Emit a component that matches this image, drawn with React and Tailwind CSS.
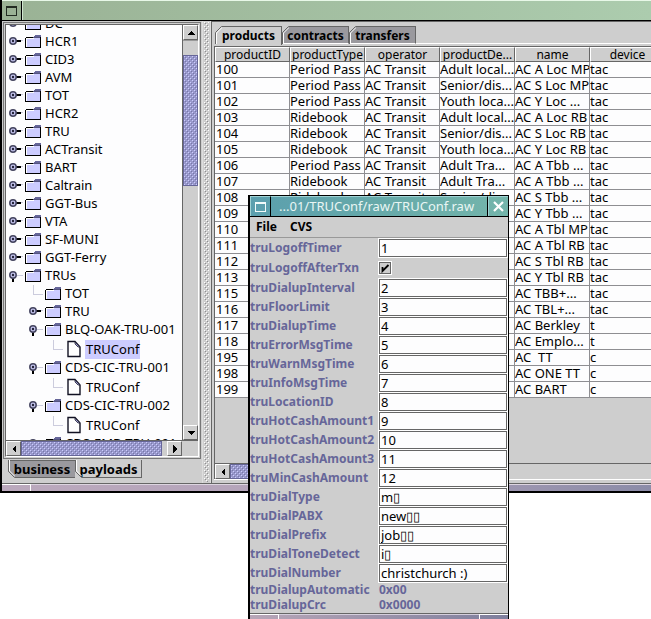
import React from "react";

const rows = [
  ["100", "Period Pass", "AC Transit", "Adult local...", "AC A Loc MP", "tac"],
  ["101", "Period Pass", "AC Transit", "Senior/dis...", "AC S Loc MP", "tac"],
  ["102", "Period Pass", "AC Transit", "Youth loca...", "AC Y Loc ...", "tac"],
  ["103", "Ridebook", "AC Transit", "Adult local...", "AC A Loc RB", "tac"],
  ["104", "Ridebook", "AC Transit", "Senior/dis...", "AC S Loc RB", "tac"],
  ["105", "Ridebook", "AC Transit", "Youth loca...", "AC Y Loc RB", "tac"],
  ["106", "Period Pass", "AC Transit", "Adult Tra...", "AC A Tbb ...", "tac"],
  ["107", "Ridebook", "AC Transit", "Adult Tra...", "AC A Tbb ...", "tac"],
  ["108", "Ridebook", "AC Transit", "Senior/di...", "AC S Tbb ...", "tac"],
  ["109", "", "", "", "AC Y Tbb ...", "tac"],
  ["110", "", "", "", "AC A Tbl MP", "tac"],
  ["111", "", "", "", "AC A Tbl RB", "tac"],
  ["112", "", "", "", "AC S Tbl RB", "tac"],
  ["113", "", "", "", "AC Y Tbl RB", "tac"],
  ["115", "", "", "", "AC TBB+...", "tac"],
  ["116", "", "", "", "AC TBL+...", "tac"],
  ["117", "", "", "", "AC Berkley", "t"],
  ["118", "", "", "", "AC Emplo...", "t"],
  ["195", "", "", "", "AC  TT", "c"],
  ["198", "", "", "", "AC ONE TT", "c"],
  ["199", "", "", "", "AC BART", "c"],
];

const columns = ["productID", "productType", "operator", "productDe...", "name", "device"];

const topNodes = ["DC", "HCR1", "CID3", "AVM", "TOT", "HCR2", "TRU", "ACTransit", "BART", "Caltrain", "GGT-Bus", "VTA", "SF-MUNI", "GGT-Ferry"];

const fields = [
  ["truDialupInterval", "2"],
  ["truFloorLimit", "3"],
  ["truDialupTime", "4"],
  ["truErrorMsgTime", "5"],
  ["truWarnMsgTime", "6"],
  ["truInfoMsgTime", "7"],
  ["truLocationID", "8"],
  ["truHotCashAmount1", "9"],
  ["truHotCashAmount2", "10"],
  ["truHotCashAmount3", "11"],
  ["truMinCashAmount", "12"],
  ["truDialType", "m▯"],
  ["truDialPABX", "new▯▯"],
  ["truDialPrefix", "job▯▯"],
  ["truDialToneDetect", "i▯"],
  ["truDialNumber", "christchurch :)"],
];

function Bumps({ id, light, dark }) {
  return (
    <svg className="block h-full w-full" shapeRendering="crispEdges" aria-hidden="true">
      <defs>
        <pattern id={id} width="4" height="4" patternUnits="userSpaceOnUse">
          <rect x="0" y="0" width="1" height="1" fill={light} />
          <rect x="2" y="2" width="1" height="1" fill={light} />
          <rect x="1" y="1" width="1" height="1" fill={dark} />
          <rect x="3" y="3" width="1" height="1" fill={dark} />
        </pattern>
      </defs>
      <rect width="100%" height="100%" fill={`url(#${id})`} />
    </svg>
  );
}

function Handle({ open }) {
  return (
    <svg className="h-[18px] w-[14px] shrink-0" viewBox="0 0 14 18" aria-hidden="true">
      {open ? (
        <>
          <path d="M8 8.5H14" stroke="#ccccdd" />
          <path d="M4 11V15" stroke="#000" strokeWidth="2" />
        </>
      ) : (
        <>
          <path d="M12 7.5H14" stroke="#ccccdd" />
          <path d="M7 8H12" stroke="#000" strokeWidth="2" />
        </>
      )}
      <circle cx="4" cy="8" r="3.2" fill="#c4c4ee" stroke="#44445f" strokeWidth="1.5" />
      <circle cx="4" cy="8" r="1.2" fill="#222238" />
    </svg>
  );
}

function Folder() {
  return (
    <svg className="h-[18px] w-4 shrink-0" viewBox="0 0 16 18" shapeRendering="crispEdges" aria-hidden="true">
      <rect x="1" y="5" width="14" height="9" fill="#ccccff" />
      <path d="M1 5.5H9M1.5 5V14" stroke="#fff" />
      <path d="M.5 5V14.5H15.5V4M1 4.5H9" stroke="#000" fill="none" />
      <path d="M9 3H10V2H16V4H9Z" fill="#666699" />
      <path d="M8 4.5H15" stroke="#555580" />
    </svg>
  );
}

function Leaf() {
  return (
    <svg className="h-5 w-[14px] shrink-0" viewBox="0 0 14 20" aria-hidden="true">
      <path d="M1 2.5H8L13 8V17.5H1Z" fill="#fff" stroke="#111122" strokeWidth="1.4" />
      <path d="M8 3V5L11 8H13Z" fill="#9999cc" stroke="#222233" strokeWidth=".8" />
    </svg>
  );
}

function Elbow() {
  return (
    <svg className="h-[18px] w-[14px] shrink-0" viewBox="0 0 14 18" shapeRendering="crispEdges" aria-hidden="true">
      <path d="M4.5 0V9.5H14" stroke="#ccccdd" fill="none" />
    </svg>
  );
}

function Node({ label, open }) {
  return (
    <li className="flex h-[18px] items-center">
      <Handle open={open} />
      <span className="w-[2px]" />
      <Folder />
      <span className="ml-1 whitespace-nowrap">{label}</span>
    </li>
  );
}

function LeafNode({ selected }) {
  return (
    <li className="flex h-5 items-center pl-5">
      <Elbow />
      <span className="ml-1"><Leaf /></span>
      <span className={selected ? "ml-1 bg-[#ccccff] px-px leading-[19px]" : "ml-1 px-px leading-[19px]"}>TRUConf</span>
    </li>
  );
}

function ArrowButton({ dir, label }) {
  const d = {
    up: "M3 9L7 5L11 9Z",
    down: "M3 5L7 9L11 5Z",
    left: "M9 3L5 7L9 11Z",
    right: "M5 3L9 7L5 11Z",
  }[dir];
  return (
    <button type="button" aria-label={label} className="flex size-[15px] shrink-0 items-center justify-center border border-[#666] border-t-white border-l-white bg-[#cecece]">
      <svg className="size-[14px] shrink-0" viewBox="0 0 14 14" shapeRendering="crispEdges"><path d={d} /></svg>
    </button>
  );
}

function TopTab({ label, selected }) {
  return (
    <button type="button" className={selected
      ? "relative h-[19px] w-[67px] border-t border-r border-[#666] bg-[#cecece] pl-px text-center leading-[18px]"
      : "relative h-[18px] w-[67px] border-t border-r border-b border-[#666] border-b-white bg-[#9a999e] pl-px text-center leading-[17px]"}>
      <svg className="absolute -top-px left-0 h-[19px] w-[7px]" viewBox="0 0 7 19" aria-hidden="true">
        <path d="M0 0H7L0 7Z" fill="#cecece" />
        <path d="M.5 18V6.5L6.5 .5" stroke="#666" fill="none" />
        <path d="M1.5 18V7L7 1.5" stroke="#fff" fill="none" />
      </svg>
      {label}
    </button>
  );
}

function BottomTab({ label, selected }) {
  return (
    <button type="button" className={selected
      ? "relative h-[18px] w-[66px] border-r border-b border-[#666] bg-[#cecece] text-center leading-[18px]"
      : "relative h-[18px] w-[68px] border border-[#666] bg-[#9a999e] text-center leading-[17px]"}>
      <svg className="absolute -bottom-px -left-px h-[18px] w-[7px]" viewBox="0 0 7 18" aria-hidden="true">
        <path d="M0 18H7L0 11Z" fill="#cecece" />
        <path d="M.5 0V11.5L6.5 17.5" stroke="#666" fill="none" />
        <path d="M1.5 0V11L7 16.5" stroke="#fff" fill="none" />
      </svg>
      {label}
    </button>
  );
}

function TreePanel() {
  return (
    <section className="flex w-[200px] shrink-0 flex-col px-px pt-px pb-[5px]">
      <div className="border border-[#777] bg-[#cecece] p-px">
        <div className="border border-[#666] border-r-white border-b-white bg-white">
          <div className="flex h-[415px]">
            <div className="min-w-0 flex-1 overflow-hidden bg-[#fdfdfe]">
              <ul className="-mt-[10px] pl-[3px] text-[13px]">
                {topNodes.map((n) => <Node key={n} label={n} />)}
                <Node label="TRUs" open />
                <li>
                  <ul className="pl-5">
                    <li className="flex h-[18px] items-center">
                      <Elbow />
                      <span className="w-[2px]" />
                      <Folder />
                      <span className="ml-1">TOT</span>
                    </li>
                    <Node label="TRU" />
                    <Node label="BLQ-OAK-TRU-001" open />
                    <LeafNode selected />
                    <Node label="CDS-CIC-TRU-001" open />
                    <LeafNode />
                    <Node label="CDS-CIC-TRU-002" open />
                    <LeafNode />
                    <Node label="CDS-EMB-TRU-001" open />
                  </ul>
                </li>
              </ul>
            </div>
            <div className="flex w-4 shrink-0 flex-col border-l border-[#666] bg-[#cecece]">
              <ArrowButton dir="up" label="Scroll up" />
              <div className="h-[15px] border-t border-[#999]" />
              <div className="h-[131px] border border-[#666699] bg-[#9999cc]">
                <Bumps id="tree-v" light="#ccccff" dark="#7777aa" />
              </div>
              <div className="flex-1" />
              <ArrowButton dir="down" label="Scroll down" />
            </div>
          </div>
          <div className="flex h-4 border-t border-[#666] bg-[#cecece]">
            <ArrowButton dir="left" label="Scroll left" />
            <div className="w-[141px] border border-[#666699] bg-[#9999cc]">
              <Bumps id="tree-h" light="#ccccff" dark="#7777aa" />
            </div>
            <div className="w-[5px]" />
            <ArrowButton dir="right" label="Scroll right" />
          </div>
        </div>
      </div>
      <div className="mt-px flex pl-[5px] text-[13px] font-bold">
        <BottomTab label="business" />
        <BottomTab label="payloads" selected />
      </div>
    </section>
  );
}

function ProductsPanel() {
  return (
    <section className="flex min-w-0 flex-1 flex-col border-t border-l border-[#666] pt-[4px] pb-[3px] pl-[2px]">
      <div className="flex h-[19px] items-start pl-px text-xs font-bold">
        <TopTab label="products" selected />
        <TopTab label="contracts" />
        <TopTab label="transfers" />
        <div className="h-[18px] flex-1 border-b border-white" />
      </div>
      <div className="mt-px flex flex-1 flex-col border-t border-l border-[#666]">
        <div className="min-h-0 flex-1 overflow-hidden">
          <table className="w-[450px] table-fixed border-separate border-spacing-0 text-[13px]">
            <thead className="text-xs">
              <tr>
                {columns.map((c) => (
                  <th key={c} scope="col" className="h-[15px] overflow-hidden border border-[#666] border-t-white border-l-white bg-[#cecece] p-0 text-center leading-[13px] font-normal whitespace-nowrap">{c}</th>
                ))}
              </tr>
            </thead>
            <tbody>
              {rows.map((r) => (
                <tr key={r[0]}>
                  {r.map((v, i) => (
                    <td key={i} className={i === 0
                      ? "h-4 overflow-hidden border-r border-b border-[#8e8e92] bg-[#fdfdfe] p-0 pl-px leading-[15px] whitespace-pre"
                      : "h-4 overflow-hidden border-r border-b border-[#8e8e92] bg-[#fdfdfe] p-0 leading-[15px] whitespace-pre"}>{v}</td>
                  ))}
                </tr>
              ))}
            </tbody>
          </table>
        </div>
        <div className="flex h-4 border-t border-[#666]">
          <ArrowButton dir="left" label="Scroll table left" />
          <div className="w-[260px] border border-[#666699] bg-[#9999cc]">
            <Bumps id="table-h" light="#ccccff" dark="#7777aa" />
          </div>
        </div>
      </div>
      <div className="border-t border-white" />
    </section>
  );
}

function Field({ name, value }) {
  return (
    <div className="flex h-[19px] items-center">
      <label htmlFor={name} className="w-[129px] shrink-0 whitespace-nowrap">{name}</label>
      <input id={name} defaultValue={value} className="h-[18px] min-w-0 flex-1 border border-[#666] bg-[#fdfdfe] pl-px text-[13px] font-normal text-black outline-1 outline-white" />
    </div>
  );
}

function ConfWindow() {
  return (
    <section className="absolute top-[195px] left-[248px] w-[261px] border border-b-0 border-l-2 border-black bg-[#cecece] text-xs font-bold text-[#666699]">
      <header className="flex h-[21px] border-b border-black bg-linear-to-r from-[#5b9fae] via-[#66a9a9] to-[#74b5ab] text-[13px] font-normal text-[#e9f6f4]">
        <button type="button" aria-label="Window menu" className="flex w-5 items-center justify-center border-t border-l border-[#a0d2d4]">
          <svg className="h-[10px] w-[11px]" viewBox="0 0 11 10" shapeRendering="crispEdges"><path d="M.5 .5H10.5V9.5H.5ZM0 1.5H11" stroke="#f2fbfa" fill="none" /></svg>
        </button>
        <h2 className="flex-1 border-x border-t border-black border-t-[#a0d2d4] pl-2 leading-[19px] whitespace-nowrap">...01/TRUConf/raw/TRUConf.raw</h2>
        <button type="button" aria-label="Close" className="flex w-5 items-center justify-center border-t border-l border-[#a0d2d4]">
          <svg className="size-[11px]" viewBox="0 0 11 11"><path d="M1 1L10 10M10 1L1 10" stroke="#fff" strokeWidth="2.2" /></svg>
        </button>
      </header>
      <nav className="flex h-[21px] gap-[13px] border-b border-[#999] pl-[6px] text-black">
        <button type="button">File</button>
        <button type="button">CVS</button>
      </nav>
      <form className="pr-px">
        <Field name="truLogoffTimer" value="1" />
        <div className="flex h-[21px] items-center">
          <label htmlFor="truLogoffAfterTxn" className="w-[129px] shrink-0">truLogoffAfterTxn</label>
          <span className="grid size-3">
            <input id="truLogoffAfterTxn" type="checkbox" defaultChecked className="peer col-start-1 row-start-1 size-3 appearance-none border border-[#666] bg-[#cecece] outline-1 outline-white" />
            <svg className="pointer-events-none invisible col-start-1 row-start-1 size-3 peer-checked:visible" viewBox="0 0 12 12"><path d="M3.5 5V9L9.5 3" stroke="#000" strokeWidth="1.8" fill="none" /></svg>
          </span>
        </div>
        {fields.map(([n, v]) => <Field key={n} name={n} value={v} />)}
        <dl className="grid grid-cols-[129px_1fr] pb-px leading-[15px]">
          <dt>truDialupAutomatic</dt><dd>0x00</dd>
          <dt>truDialupCrc</dt><dd>0x0000</dd>
        </dl>
      </form>
      <footer className="flex h-[7px] border-t border-[#666] bg-linear-to-r from-[#b8a6b8] to-[#7f7f9d]">
        <div className="w-[29px] border-t border-r border-white" />
        <div className="flex-1 border-t border-[#d5cfdc]" />
        <div className="w-[29px] border-t border-l border-white" />
      </footer>
    </section>
  );
}

export default function App() {
  return (
    <div className="relative min-h-screen overflow-hidden bg-white font-['Noto_Sans','Liberation_Sans',sans-serif] text-black">
      <main className="border-b-2 border-l-2 border-black bg-[#cecece]">
        <header className="flex h-[21px] border-t border-b border-t-[#e8f8e8] border-b-black bg-linear-to-r from-[#9ab295] to-[#acccae]">
          <button type="button" aria-label="Window menu" className="flex w-5 items-center justify-center border-r border-black">
            <svg className="h-[10px] w-[11px]" viewBox="0 0 11 10" shapeRendering="crispEdges"><path d="M.5 .5H10.5V9.5H.5ZM0 1.5H11" stroke="#222c22" fill="none" /></svg>
          </button>
          <div className="flex-1 border-l border-[#d0e6d0]" />
        </header>
        <div className="flex">
          <TreePanel />
          <div className="relative w-[9px] shrink-0 border-x border-[#dedede]">
            <div className="absolute inset-px">
              <Bumps id="split" light="#ffffff" dark="#8e8e90" />
            </div>
          </div>
          <ProductsPanel />
        </div>
        <footer className="flex h-2 border-t border-[#666] bg-linear-to-r from-[#bba9bd] via-[#b3a3ba] to-[#8c8ca8]">
          <div className="w-[29px] border-t border-r border-white" />
          <div className="flex-1 border-t border-[#ddd5e0]" />
        </footer>
      </main>
      <ConfWindow />
    </div>
  );
}
